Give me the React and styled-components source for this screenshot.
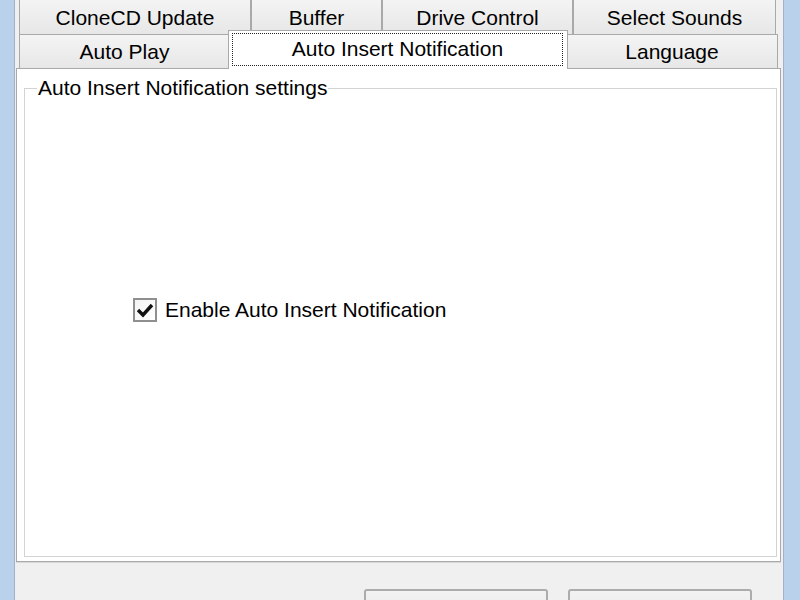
import React from "react";
import styled, { createGlobalStyle } from "styled-components";

const GlobalStyle = createGlobalStyle`
  html, body {
    margin: 0;
    padding: 0;
    width: 800px;
    height: 600px;
    overflow: hidden;
    background: #b9d1ea;
    font-family: "Liberation Sans", Arial, sans-serif;
  }
`;

const Frame = styled.div`
  display: flex;
  width: 800px;
  height: 600px;
  box-sizing: border-box;
  padding: 0 16px 0 14px;
  background: #b9d1ea;
`;

const Client = styled.div`
  flex: 1;
  display: flex;
  flex-direction: column;
  background: #f0f0f0;
  border-left: 1px solid #9fb2c8;
  border-right: 1px solid #9fb2c8;
  overflow: hidden;
  color: #000;
  font-size: 21px;
`;

const TabArea = styled.div`
  flex-shrink: 0;
  display: flex;
  flex-direction: column;
  margin: -2px 0 0 4px;
  position: relative;
  z-index: 1;
`;

const TabRow = styled.div`
  display: flex;
  height: ${(p) => p.$height}px;
`;

const Tab = styled.div`
  width: ${(p) => p.$w}px;
  box-sizing: border-box;
  display: flex;
  align-items: center;
  justify-content: center;
  border: 1px solid #a9a9a9;
  border-bottom: none;
  background: linear-gradient(#f4f4f4, #e7e7e7);
  padding-top: ${(p) => p.$pt || 0}px;
  white-space: nowrap;
`;

const ActiveTab = styled.div`
  width: ${(p) => p.$w}px;
  box-sizing: border-box;
  display: flex;
  border: 1px solid #a9a9a9;
  border-bottom: none;
  background: #fff;
  margin: -4px -2px -1px -2px;
  height: 39px;
  padding: 2px 4px 3px 3px;
  position: relative;
  z-index: 2;
`;

const FocusLabel = styled.span`
  flex: 1;
  display: flex;
  align-items: center;
  justify-content: center;
  border: 1px dotted #222;
  padding-bottom: 2px;
  white-space: nowrap;
`;

const Panel = styled.div`
  flex-shrink: 0;
  height: 494px;
  margin: 0 2px 0 1px;
  box-sizing: border-box;
  background: #fff;
  border: 1px solid #a9a9a9;
  box-shadow: 0 1px 0 #d8d8d8;
  padding: 7px 3px 4px 7px;
  display: flex;
`;

const Group = styled.fieldset`
  flex: 1;
  margin: 0;
  padding: 0 12px;
  border: 1px solid #d3d3d3;
  box-shadow: inset 1px 1px 0 #fff;
  display: flex;
  flex-direction: column;
  min-width: 0;
`;

const Legend = styled.legend`
  padding: 0 1px;
  line-height: 24px;
  margin-top: 1px;
`;

const CheckRow = styled.label`
  display: flex;
  align-items: center;
  gap: 8px;
  margin: 198px 0 0 96px;
  line-height: 24px;
`;

const Box = styled.span`
  width: 24px;
  height: 24px;
  box-sizing: border-box;
  border: 2px solid #8e8f8f;
  background: linear-gradient(135deg, #f4f4f4, #ffffff);
  display: flex;
  align-items: center;
  justify-content: center;
`;

const Footer = styled.div`
  flex-shrink: 0;
  display: flex;
  justify-content: flex-end;
  gap: 20px;
  padding: 27px 31px 0 0;
`;

const Button = styled.button`
  width: 184px;
  height: 46px;
  border: 2px solid #acacac;
  border-radius: 3px;
  background: linear-gradient(#f2f2f2, #e5e5e5);
`;

const Check = () => (
  <svg width="18" height="16" viewBox="0 0 18 16">
    <path d="M2 8 L7 13 L16 3" fill="none" stroke="#111" strokeWidth="3.4" strokeLinejoin="miter" />
  </svg>
);

const App = () => {
  return (
    <>
      <GlobalStyle />
      <Frame>
        <Client>
          <TabArea>
            <TabRow $height={36}>
              <Tab $w={232} $pt={2}>CloneCD Update</Tab>
              <Tab $w={131} $pt={2}>Buffer</Tab>
              <Tab $w={191} $pt={2}>Drive Control</Tab>
              <Tab $w={203} $pt={2}>Select Sounds</Tab>
            </TabRow>
            <TabRow $height={34}>
              <Tab $w={211}>Auto Play</Tab>
              <ActiveTab $w={340}>
                <FocusLabel>Auto Insert Notification</FocusLabel>
              </ActiveTab>
              <Tab $w={212}>Language</Tab>
            </TabRow>
          </TabArea>
          <Panel>
            <Group>
              <Legend>Auto Insert Notification settings</Legend>
              <CheckRow>
                <Box>
                  <Check />
                </Box>
                Enable Auto Insert Notification
              </CheckRow>
            </Group>
          </Panel>
          <Footer>
            <Button aria-label="OK" />
            <Button aria-label="Cancel" />
          </Footer>
        </Client>
      </Frame>
    </>
  );
};

export default App;
